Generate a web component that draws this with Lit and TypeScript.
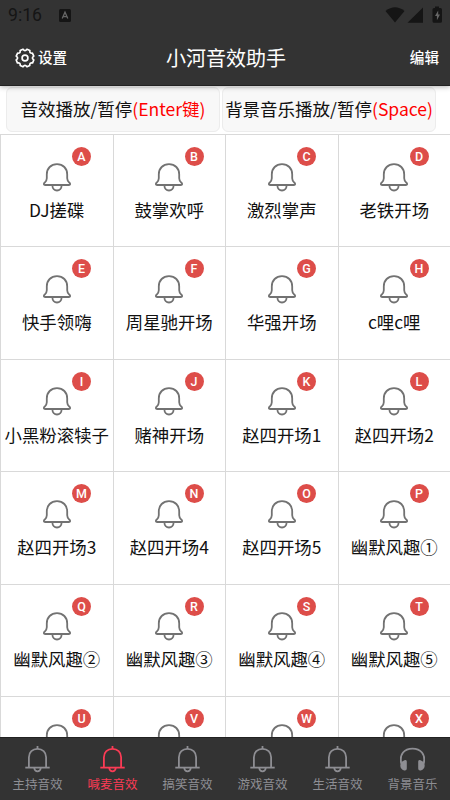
import { LitElement, html, css, svg, nothing } from 'lit';
import { customElement, property } from 'lit/decorators.js';
import { classMap } from 'lit/directives/class-map.js';

const SOUNDS = [
  'DJ搓碟', '鼓掌欢呼', '激烈掌声', '老铁开场',
  '快手领嗨', '周星驰开场', '华强开场', 'c哩c哩',
  '小黑粉滚犊子', '赌神开场', '赵四开场1', '赵四开场2',
  '赵四开场3', '赵四开场4', '赵四开场5', '幽默风趣①',
  '幽默风趣②', '幽默风趣③', '幽默风趣④', '幽默风趣⑤',
  '', '', '', '',
];

const TABS = [
  { label: '主持音效', icon: 'bell' },
  { label: '喊麦音效', icon: 'bell', active: true },
  { label: '搞笑音效', icon: 'bell' },
  { label: '游戏音效', icon: 'bell' },
  { label: '生活音效', icon: 'bell' },
  { label: '背景音乐', icon: 'phones' },
];

const tabIcons: Record<string, unknown> = {
  bell: svg`
    <g fill="none" stroke="currentColor" stroke-width="1.8">
      <path d="M3.9 21.5V11.2C3.9 6.2 7.5 2.9 12.5 2.9S21.1 6.2 21.1 11.2V21.5" />
      <path d="M0.3 21.6H24.7" />
      <path d="M12.5 0V3" />
      <path d="M9.3 22a3.2 3.3 0 0 0 6.4 0" />
    </g>`,
  phones: svg`
    <path d="M1.3 17.5C-1 8 4.5 2.6 12.5 2.6S26 8 23.7 17.5" fill="none" stroke="currentColor" stroke-width="1.9" />
    <path d="M4.4 14.2Q6.8 13.2 6.8 15.4V22.5Q6.8 25 4.2 24.5Q0.3 23.2 0.3 19.5T4.4 14.2Z" fill="currentColor" />
    <path d="M20.6 14.2Q18.2 13.2 18.2 15.4V22.5Q18.2 25 20.8 24.5Q24.7 23.2 24.7 19.5T20.6 14.2Z" fill="currentColor" />`,
};

@customElement('sound-cell')
export class SoundCell extends LitElement {
  static styles = css`
    :host {
      display: block;
      position: relative;
      box-sizing: border-box;
      border-right: 1px solid #d9d9d9;
      border-bottom: 1px solid #d9d9d9;
      text-align: center;
    }
    .bell {
      display: block;
      width: 28px;
      height: 29px;
      margin: 27.5px 0 0 41.5px;
    }
    .badge {
      position: absolute;
      top: 12px;
      left: 71px;
      width: 19px;
      height: 19px;
      border-radius: 50%;
      background: #dd4d49;
      color: #fff;
      font: 500 12.5px/19px Roboto, sans-serif;
    }
    .name {
      margin: 5.4px -5px 0 -5px;
      font-size: 17.4px;
      line-height: 26px;
      white-space: nowrap;
      color: #111;
    }
  `;

  @property() name = '';
  @property() key = '';

  render() {
    return html`
      <svg class="bell" viewBox="0 0 28 29" fill="none" stroke="#727272" stroke-width="1.8">
        <path d="M3.8 11.4C3.8 5.3 8 1.2 14 1.2S24.2 5.3 24.2 11.4V15.2C24.2 17.6 25.3 18.6 26.4 19.7C27.6 21 27.3 22 25.9 22H2.1C0.7 22 0.4 21 1.6 19.7C2.7 18.6 3.8 17.6 3.8 15.2Z" />
        <path d="M9.4 22.5a4.6 5 0 0 0 9.2 0" />
      </svg>
      <span class="badge">${this.key}</span>
      ${this.name ? html`<div class="name">${this.name}</div>` : nothing}
    `;
  }
}

@customElement('app-root')
export class AppRoot extends LitElement {
  static styles = css`
    :host {
      display: flex;
      flex-direction: column;
      width: 450px;
      height: 800px;
      overflow: hidden;
      background: #fff;
      font-family: "Noto Sans CJK SC", sans-serif;
    }
    .top {
      position: relative;
      z-index: 1;
      flex: none;
      height: 86px;
      box-sizing: border-box;
      border-bottom: 1px solid #222;
      background: #333;
      color: #fff;
      box-shadow: 0 1px 5px rgba(0, 0, 0, 0.3);
    }
    .status {
      display: flex;
      align-items: center;
      height: 30px;
      padding: 0 7px 0 8px;
      color: #151515;
      font: 17.6px/30px Roboto, sans-serif;
    }
    .status .lang {
      margin-left: 17px;
    }
    .status .signals {
      margin-left: auto;
      margin-top: -1px;
    }
    .bar {
      display: grid;
      grid-template-columns: 1fr auto 1fr;
      align-items: center;
      height: 55px;
      padding: 0 11px 0 15px;
      font-size: 14.6px;
      font-weight: 500;
    }
    .settings {
      display: flex;
      align-items: center;
      gap: 3px;
    }
    .title {
      font-size: 20px;
      font-weight: 400;
      margin-left: -2px;
    }
    .edit {
      text-align: right;
    }
    .settings span,
    .edit {
      margin-top: -2px;
    }
    .controls {
      display: flex;
      flex: none;
      gap: 2px;
      height: 48px;
      box-sizing: border-box;
      padding: 1px 13px 2px 6px;
    }
    .control {
      display: flex;
      justify-content: center;
      box-sizing: border-box;
      width: 214px;
      height: 45px;
      border: 1px solid #ececec;
      border-radius: 6px;
      background: #f8f8f8;
      color: #111;
      font-size: 17.5px;
      line-height: 41px;
      white-space: nowrap;
    }
    .control em {
      color: #f00;
      font-style: normal;
    }
    .grid {
      display: grid;
      flex: 1;
      min-height: 0;
      overflow: hidden;
      grid-template-columns: repeat(4, 112.5px);
      grid-auto-rows: 112.4px;
      border-top: 1px solid #d9d9d9;
      border-left: 1px solid #d9d9d9;
    }
    .tabs {
      display: grid;
      flex: none;
      grid-template-columns: repeat(6, 1fr);
      height: 63px;
      box-sizing: border-box;
      border-top: 1px solid #222;
      background: #333;
    }
    .tab {
      display: flex;
      flex-direction: column;
      align-items: center;
      padding-top: 8px;
      color: #8e8e93;
      font-size: 12.5px;
      line-height: 18px;
    }
    .tab svg {
      margin-bottom: 2px;
    }
    .tab.active {
      color: #fb3b55;
    }
  `;

  renderStatus() {
    return html`
      <div class="status">
        <span>9:16</span>
        <svg class="lang" width="12" height="13" viewBox="0 0 12 13">
          <rect width="12" height="13" rx="1.5" fill="#151515" />
          <path d="M3.2 9.6L6 3.2L8.8 9.6M4.2 7.6H7.8" fill="none" stroke="#666" stroke-width="1.3" />
        </svg>
        <svg class="signals" width="58" height="18" viewBox="0 0 58 18" fill="#151515">
          <path d="M0.5 5Q10 -2.5 19.5 5L10 16.5Z" />
          <path d="M22.5 16.7L38 1.5V16.7Z" />
          <path d="M50 0.5H54V2H55.5Q57 2 57 3.5V15.3Q57 16.8 55.5 16.8H49Q47.5 16.8 47.5 15.3V3.5Q47.5 2 49 2H50Z" />
          <path d="M53.2 4.5L50 10H51.9V14.3L55 8.6H53.2Z" fill="#666" />
        </svg>
      </div>
    `;
  }

  render() {
    return html`
      <header class="top">
        ${this.renderStatus()}
        <div class="bar">
          <div class="settings">
            <svg width="20" height="20" viewBox="0 0 20 20" fill="none" stroke="#fff" stroke-width="1.7" stroke-linejoin="round">
              <path d="M8 1.2Q10 3.9 12 1.2L14.9 2.5Q14.2 5.5 17.4 5.2L18.8 8.1Q16 10 18.8 12L17.6 14.9Q14.3 14.4 14.8 17.5L12 18.8Q10 16.1 8 18.8L5.2 17.5Q5.7 14.4 2.4 14.9L1.2 12Q4 10 1.2 8.1L2.6 5.2Q5.8 5.5 5.1 2.5Z" />
              <circle cx="10" cy="10" r="2.9" />
            </svg>
            <span>设置</span>
          </div>
          <div class="title">小河音效助手</div>
          <div class="edit">编辑</div>
        </div>
      </header>
      <div class="controls">
        <div class="control">音效播放/暂停<em>(Enter键)</em></div>
        <div class="control">背景音乐播放/暂停<em>(Space)</em></div>
      </div>
      <main class="grid">
        ${SOUNDS.map((name, i) => html`
          <sound-cell .name=${name} .key=${String.fromCharCode(65 + i)}></sound-cell>
        `)}
      </main>
      <nav class="tabs">
        ${TABS.map(tab => html`
          <div class=${classMap({ tab: true, active: !!tab.active })}>
            <svg width="25" height="27" viewBox="0 0 25 27">${tabIcons[tab.icon]}</svg>
            <span>${tab.label}</span>
          </div>
        `)}
      </nav>
    `;
  }
}
